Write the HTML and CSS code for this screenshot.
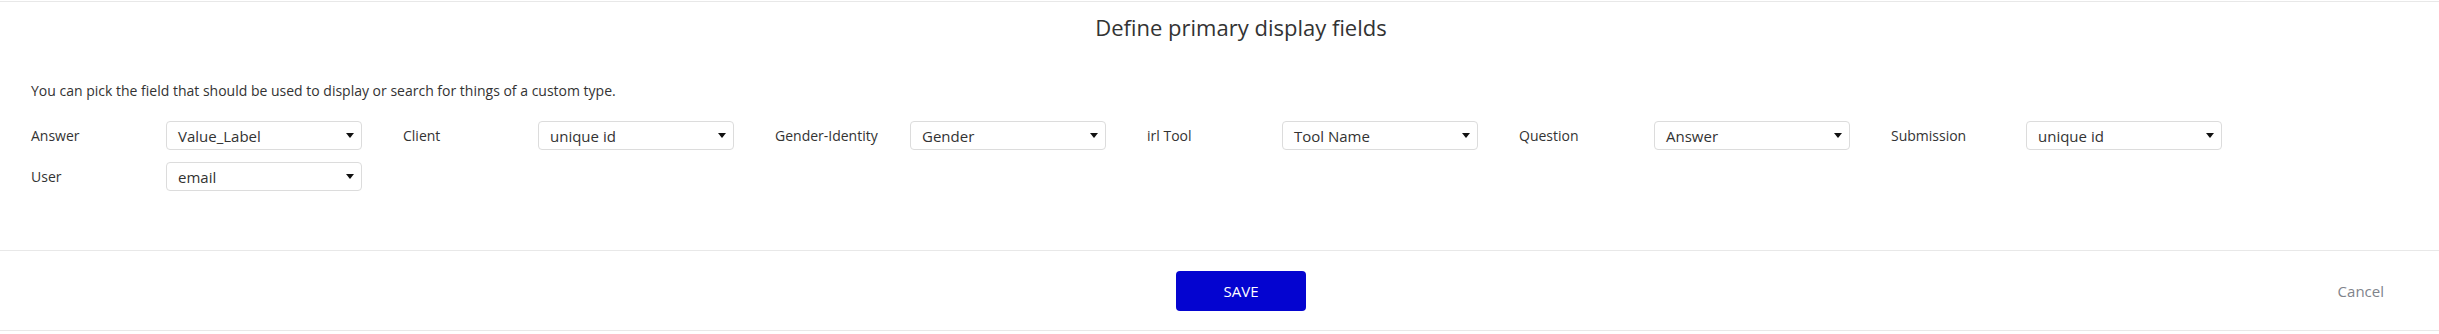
FILE: index.html
```html
<!DOCTYPE html>
<html>
  <head>
    <meta charset="UTF-8">
    <meta name="viewport" content="width=device-width, initial-scale=1.0"/>
    <title>Define primary display fields</title>
    <link rel="stylesheet" href="styles.css">
  </head>
  <body>
    <div class="modal">
      <h2 class="modal-title">Define primary display fields</h2>

      <div class="modal-body">
        <p class="intro">You can pick the field that should be used to display or search for things of a custom type.</p>

        <div class="fields">
          <div class="field">
            <label>Answer</label>
            <div class="select"><span>Value_Label</span><svg class="caret" width="8" height="5" viewBox="0 0 8 5"><path d="M0 0h8L4 5z"/></svg></div>
          </div>
          <div class="field">
            <label>Client</label>
            <div class="select"><span>unique id</span><svg class="caret" width="8" height="5" viewBox="0 0 8 5"><path d="M0 0h8L4 5z"/></svg></div>
          </div>
          <div class="field">
            <label>Gender-Identity</label>
            <div class="select"><span>Gender</span><svg class="caret" width="8" height="5" viewBox="0 0 8 5"><path d="M0 0h8L4 5z"/></svg></div>
          </div>
          <div class="field">
            <label>irl Tool</label>
            <div class="select"><span>Tool Name</span><svg class="caret" width="8" height="5" viewBox="0 0 8 5"><path d="M0 0h8L4 5z"/></svg></div>
          </div>
          <div class="field">
            <label>Question</label>
            <div class="select"><span>Answer</span><svg class="caret" width="8" height="5" viewBox="0 0 8 5"><path d="M0 0h8L4 5z"/></svg></div>
          </div>
          <div class="field">
            <label>Submission</label>
            <div class="select"><span>unique id</span><svg class="caret" width="8" height="5" viewBox="0 0 8 5"><path d="M0 0h8L4 5z"/></svg></div>
          </div>
          <div class="field">
            <label>User</label>
            <div class="select"><span>email</span><svg class="caret" width="8" height="5" viewBox="0 0 8 5"><path d="M0 0h8L4 5z"/></svg></div>
          </div>
        </div>
      </div>

      <div class="modal-footer">
        <span></span>
        <button class="button-save">SAVE</button>
        <a class="link-cancel" href="#">Cancel</a>
      </div>
    </div>
  </body>
</html>
```

FILE: styles.css
```css
*
{
  box-sizing: border-box;
}

body
{
  margin: 0;
  padding-top: 1px;
  background: #ffffff;
  font-family: "Open Sans", "Liberation Sans", sans-serif;
  color: #333333;
}

.modal
{
  border-top: 1px solid #e8e8e8;
  border-bottom: 1px solid #e8e8e8;
}

.modal-title
{
  margin: 0;
  padding: 10px 0 0 43px;
  font-size: 22px;
  line-height: 30px;
  font-weight: 400;
  text-align: center;
  color: #333333;
}

.modal-body
{
  padding: 39px 31px 59px;
  border-bottom: 1px solid #e8e8e8;
}

.intro
{
  margin: 0 0 20px;
  font-size: 14px;
  line-height: 20px;
}

.fields
{
  display: flex;
  flex-wrap: wrap;
  row-gap: 12px;
}

.field
{
  display: flex;
  align-items: center;
  width: 372px;
}

.field label
{
  width: 135px;
  font-size: 14px;
}

.select
{
  display: flex;
  align-items: center;
  justify-content: space-between;
  width: 196px;
  height: 29px;
  padding: 0 7px 0 11px;
  border: 1px solid #dcdcdc;
  border-radius: 4px;
  font-size: 15px;
}

.caret
{
  fill: #111111;
}

.modal-footer
{
  display: grid;
  grid-template-columns: 1fr auto 1fr;
  align-items: center;
  height: 79px;
  padding-left: 43px;
}

.button-save
{
  width: 130px;
  height: 40px;
  border: 0;
  border-radius: 4px;
  background: #0404d0;
  color: #ffffff;
  font-family: inherit;
  font-size: 15px;
}

.link-cancel
{
  justify-self: end;
  margin-right: 55px;
  font-size: 15px;
  color: #7f848c;
  text-decoration: none;
}
```
